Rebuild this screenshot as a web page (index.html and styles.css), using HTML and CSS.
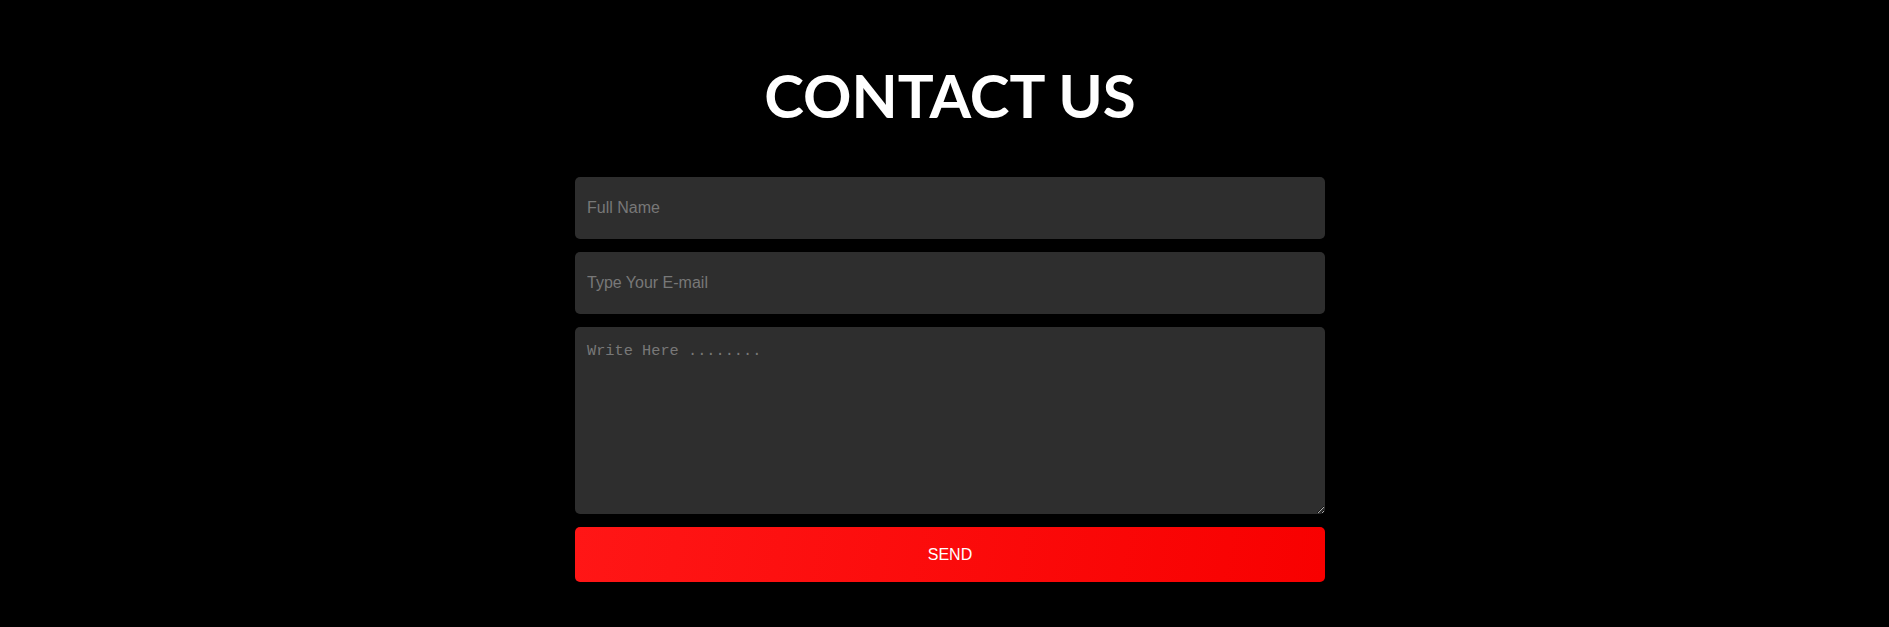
FILE: index.html
```html
<!DOCTYPE html>
<html lang="en">
<head>
<meta charset="utf-8">
<title>Contact Us</title>
<link rel="stylesheet" href="styles.css">
</head>
<body>
<section class="contact">
  <h1 class="contact-title">CONTACT US</h1>
  <form class="contact-form">
    <input class="field" type="text" placeholder="Full Name">
    <input class="field" type="email" placeholder="Type Your E-mail">
    <textarea class="field field-area" placeholder="Write Here ........"></textarea>
    <button class="send" type="button">SEND</button>
  </form>
</section>
</body>
</html>
```
FILE: styles.css
```css
html, body {
  margin: 0;
  background: #000;
}
body {
  padding-left: 11px;
  font-family: "Liberation Sans", Arial, sans-serif;
}
.contact {
  display: flex;
  flex-direction: column;
  align-items: center;
  padding-top: 59px;
}
.contact-title {
  margin: 0 0 46px;
  font-family: Lato, sans-serif;
  font-weight: 700;
  font-size: 60px;
  line-height: 72px;
  color: #fff;
}
.contact-form {
  width: 750px;
  display: flex;
  flex-direction: column;
  gap: 13px;
}
.field {
  box-sizing: border-box;
  width: 100%;
  height: 62px;
  margin: 0;
  padding: 0 12px;
  border: none;
  border-radius: 5px;
  background: #2e2e2e;
  color: #ddd;
  font-family: "Liberation Sans", Arial, sans-serif;
  font-size: 16px;
  outline: none;
}
.field::placeholder {
  color: #787878;
}
.field-area {
  height: 187px;
  padding: 15px 12px 12px;
  font-family: "Liberation Mono", monospace;
  font-size: 15.3px;
  resize: vertical;
}
.send {
  height: 55px;
  border: none;
  border-radius: 5px;
  background: linear-gradient(100deg, #ff1616 0%, #f80000 100%);
  color: #fff;
  font-family: "Liberation Sans", Arial, sans-serif;
  font-size: 16px;
  cursor: pointer;
}
```
